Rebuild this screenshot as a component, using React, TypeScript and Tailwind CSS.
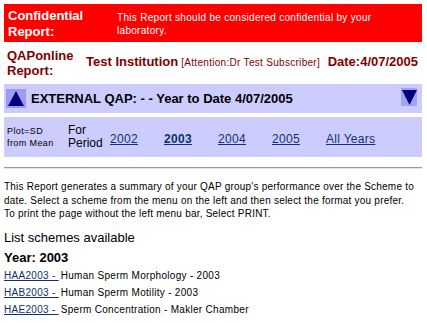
function UpArrow() {
  return (
    <span className="flex h-[19px] w-[20px] shrink-0 items-center justify-center bg-[#9b9bf3]">
      <svg width="18" height="17" viewBox="0 0 18 17">
        <polygon points="1,16 9,1 17,16" fill="#00007e" />
      </svg>
    </span>
  );
}

function DownArrow() {
  return (
    <span className="flex h-[18px] w-[16px] shrink-0 items-center justify-center bg-[#a3a3f5]">
      <svg width="15" height="16" viewBox="0 0 15 16">
        <polygon points="0,1 15,1 7.5,16" fill="#00007e" />
      </svg>
    </span>
  );
}

const years = [
  { label: "2002", current: false },
  { label: "2003", current: true },
  { label: "2004", current: false },
  { label: "2005", current: false },
  { label: "All Years", current: false },
];

const schemes = [
  { code: "HAA2003 -\u00a0", name: "Human Sperm Morphology - 2003" },
  { code: "HAB2003 -\u00a0", name: "Human Sperm Motility - 2003" },
  { code: "HAE2003 -\u00a0", name: "Sperm Concentration - Makler Chamber" },
];

export default function App() {
  return (
    <div className="h-[323px] w-[427px] overflow-hidden bg-white pt-[4px] pl-[4px] font-['Liberation_Sans',Arial,sans-serif] text-black">
      <div className="w-[418px]">
        {/* confidential banner */}
        <div className="flex h-[38px] bg-[#ff0000] text-white">
          <div className="w-[113px] shrink-0 pt-[4px] pl-[4px] text-[13px] font-bold leading-[16px]">
            Confidential
            <br />
            Report:
          </div>
          <div className="pt-[7px] text-[10px] leading-[13px] tracking-[0.3px]">
            This Report should be considered confidential by your
            <br />
            laboratory.
          </div>
        </div>

        {/* report header */}
        <div className="flex h-[42px] items-center text-[#800000]">
          <div className="w-[82px] shrink-0 pl-[3px] text-[13px] font-bold leading-[15px]">
            QAPonline
            <br />
            Report:
          </div>
          <div className="flex flex-1 items-baseline whitespace-nowrap pb-[3px]">
            <span className="text-[13px] font-bold">Test Institution</span>
            <span className="ml-[3px] text-[10px] tracking-[0.3px]">
              [Attention:Dr Test Subscriber]
            </span>
            <span className="ml-auto pr-[4px] text-[13px] font-bold">
              Date:4/07/2005
            </span>
          </div>
        </div>

        {/* scheme bar */}
        <div className="flex h-[29px] items-center bg-[#ccccff] pl-[2px] pr-[5px]">
          <UpArrow />
          <span className="ml-[5px] text-[13px] font-bold whitespace-nowrap">
            EXTERNAL QAP: - - Year to Date 4/07/2005
          </span>
          <span className="ml-auto mb-[4px]">
            <DownArrow />
          </span>
        </div>

        {/* period bar */}
        <div className="mt-[4px] flex h-[40px] items-center bg-[#ccccff]">
          <div className="w-[64px] shrink-0 whitespace-nowrap pl-[3px] text-[9px] leading-[12px] tracking-[0.4px]">
            Plot=SD
            <br />
            from Mean
          </div>
          <div className="w-[42px] shrink-0 text-[12px] leading-[13.5px]">
            For
            <br />
            Period
          </div>
          {years.map((y) => (
            <div key={y.label} className="w-[54px] shrink-0 pt-[1px]">
              <a
                href="#"
                className={`text-[12px] whitespace-nowrap tracking-[0.3px] text-[#10306b] underline ${
                  y.current ? "font-bold" : ""
                }`}
              >
                {y.label}
              </a>
            </div>
          ))}
        </div>

        <div className="mt-[10px] border-t border-b border-t-[#9a9a9a] border-b-[#e4e4e4]" />

        <p className="mt-[11px] text-[10px] leading-[13.5px] tracking-[0.22px] whitespace-nowrap">
          This Report generates a summary of your QAP group's performance over the Scheme to
          <br />
          date. Select a scheme from the menu on the left and then select the format you prefer.
          <br />
          To print the page without the left menu bar, Select PRINT.
        </p>

        <h3 className="mt-[9px] text-[13px] leading-[16px]">List schemes available</h3>
        <h2 className="mt-[4px] text-[13px] font-bold leading-[16px]">Year: 2003</h2>

        <ul className="mt-[1px]">
          {schemes.map((s) => (
            <li key={s.code} className="flex text-[10px] leading-[17px] tracking-[0.3px] whitespace-nowrap">
              <a href="#" className="text-[#10306b] underline">
                {s.code}
              </a>
              <span className="ml-[2px]">{s.name}</span>
            </li>
          ))}
        </ul>
      </div>
    </div>
  );
}
